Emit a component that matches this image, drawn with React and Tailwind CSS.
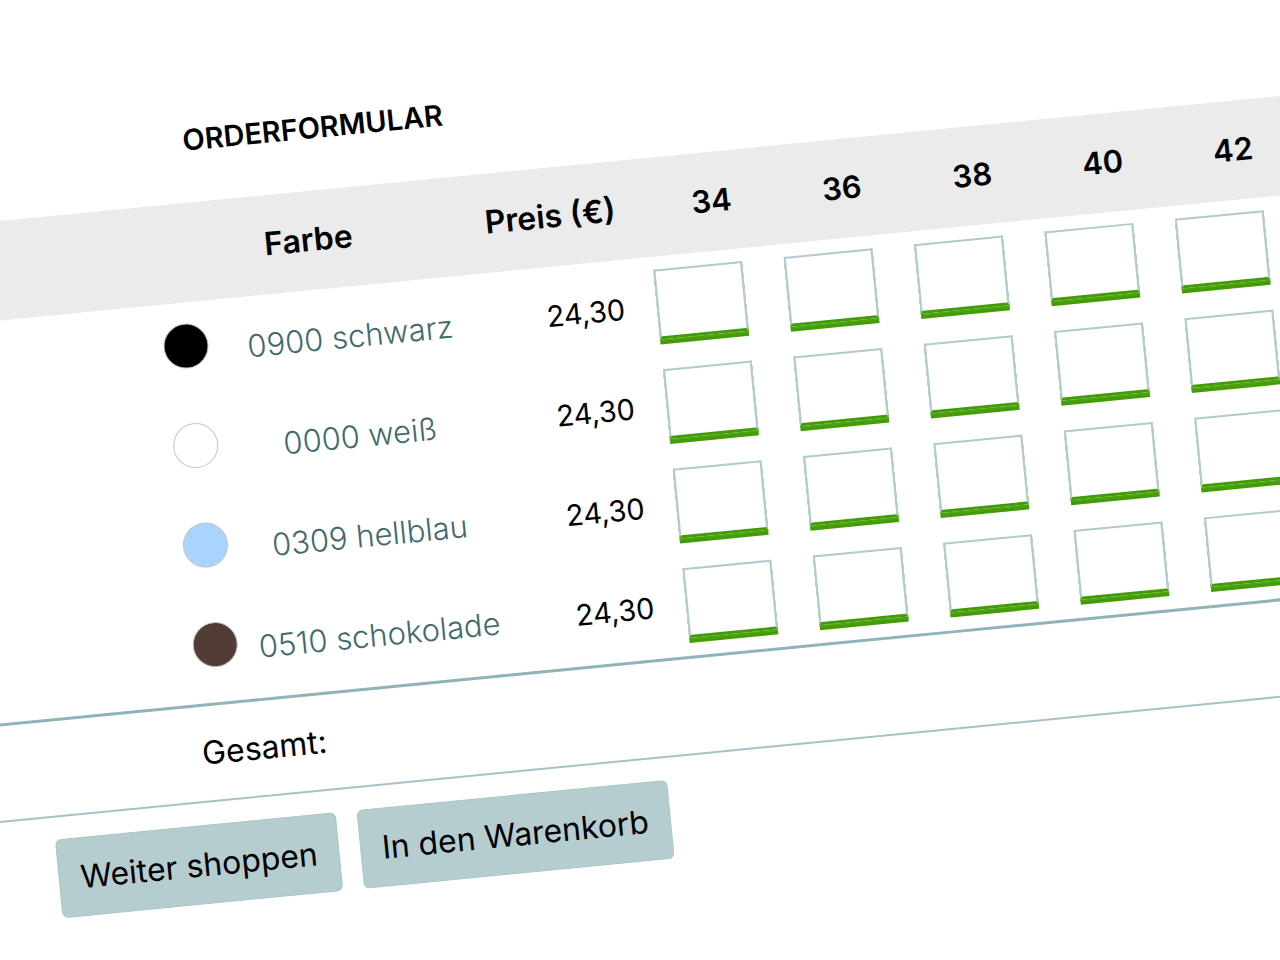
const SIZES = ["34", "36", "38", "40", "42"];

const COLORS = [
  { name: "0900 schwarz", swatch: "bg-black", price: "24,30" },
  { name: "0000 weiß", swatch: "bg-white", price: "24,30" },
  { name: "0309 hellblau", swatch: "bg-[#abd3ff]", price: "24,30" },
  { name: "0510 schokolade", swatch: "bg-[#513d36]", price: "24,30" },
];

function QuantityInput({ label }) {
  return (
    <input
      type="text"
      inputMode="numeric"
      aria-label={label}
      className="block h-[70px] w-[89px] border-2 border-b-[3px] border-[#b0cace] border-b-[#429c06] bg-white px-3 text-center shadow-[0_2px_0_#50a214,0_5px_0_#429c06] outline-none"
    />
  );
}

function ActionButton({ children }) {
  return (
    <button
      type="button"
      className="h-[79px] rounded-md border border-[#a9c5c8] bg-[#b6cdcf] px-[21px] whitespace-nowrap"
    >
      {children}
    </button>
  );
}

export default function App() {
  return (
    <main className="min-h-screen overflow-hidden bg-white font-['Inter','Noto_Sans',sans-serif] text-[32px] leading-10 text-black">
      <div className="-mx-[100px] origin-[100px_0] rotate-[-5.58deg]">
        <h1 className="h-[220px] pt-[138px] pl-[268px] text-[29px] font-semibold">
          ORDERFORMULAR
        </h1>
        <table className="w-full table-fixed border-collapse border-b-2 border-[#a5c3c7] bg-[linear-gradient(#ebebeb,#ebebeb)] bg-[length:100%_99px] bg-no-repeat">
          <colgroup>
            <col className="w-[225px]" />
            <col className="w-[67px]" />
            <col className="w-[248px]" />
            <col className="w-[182px]" />
            {SIZES.map((size) => (
              <col key={size} className="w-[131px]" />
            ))}
            <col />
          </colgroup>
          <thead>
            <tr className="h-[99px]">
              <td />
              <th scope="col" colSpan={2} className="pb-[2px] pl-[2px] font-semibold">
                Farbe
              </th>
              <th scope="col" className="pr-[30px] pb-[2px] text-right font-semibold whitespace-nowrap">
                Preis (€)
              </th>
              {SIZES.map((size) => (
                <th key={size} scope="col" className="pb-[2px] pl-[2px] text-[31px] font-semibold">
                  {size}
                </th>
              ))}
              <td />
            </tr>
          </thead>
          <tbody>
            {COLORS.map((color) => (
              <tr key={color.name} className="h-[100px] last:h-[102px]">
                <td />
                <td className="pb-[14px] pl-[4px]">
                  <span
                    className={`block size-[45px] rounded-full border border-[#c4c4c4] ${color.swatch}`}
                  />
                </td>
                <td className="text-center text-[31px] font-light whitespace-nowrap">
                  <a href="#" className="text-[#3f6a70]">
                    {color.name}
                  </a>
                </td>
                <td className="pr-[30px] text-right text-[29px]">{color.price}</td>
                {SIZES.map((size) => (
                  <td key={size} className="pb-[5px] pl-[2px]">
                    <QuantityInput label={`${color.name}, ${size}`} />
                  </td>
                ))}
                <td />
              </tr>
            ))}
          </tbody>
          <tfoot>
            <tr className="h-[97px] border-t-[3px] border-[#8fb4b8]">
              <td />
              <td colSpan={9} className="pl-[3px]">
                Gesamt:
              </td>
            </tr>
          </tfoot>
        </table>
        <div className="flex gap-[21px] pt-[22px] pl-[73px]">
          <ActionButton>Weiter shoppen</ActionButton>
          <ActionButton>In den Warenkorb</ActionButton>
        </div>
      </div>
    </main>
  );
}
